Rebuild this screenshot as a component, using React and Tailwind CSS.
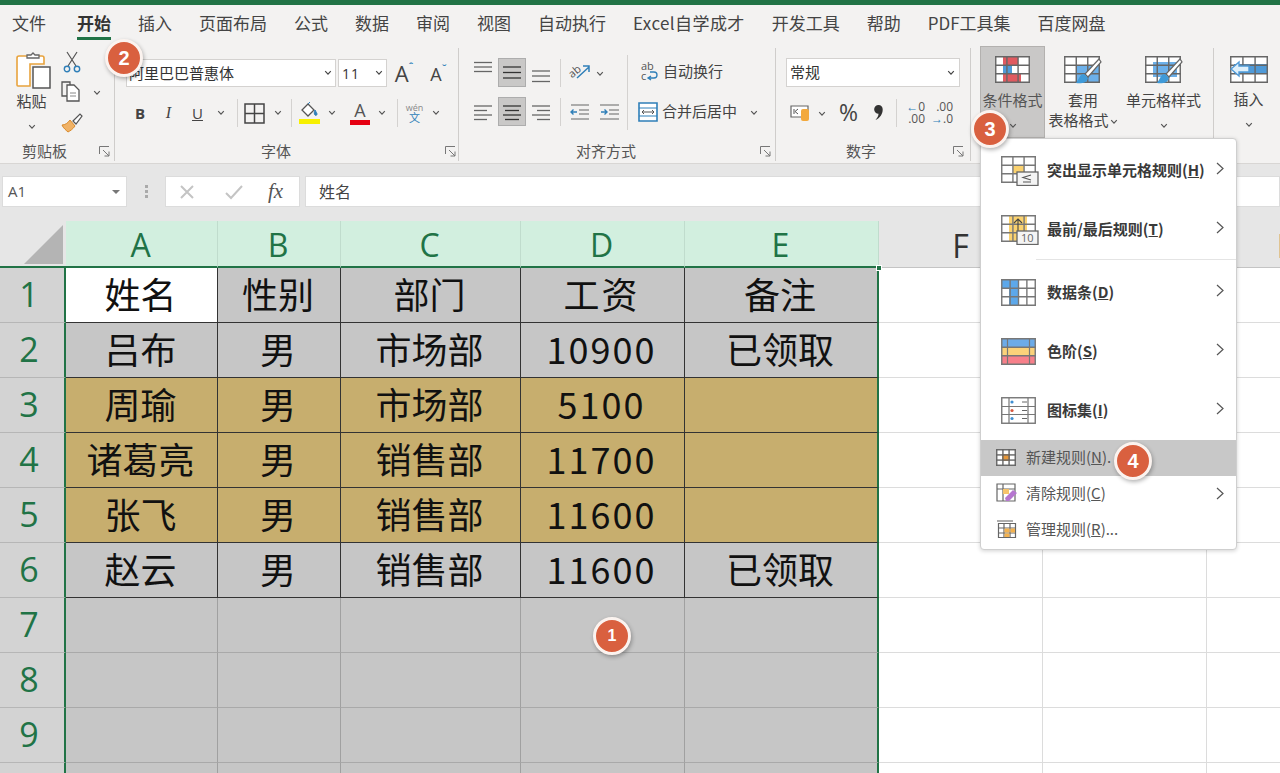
const Chev = ({ s = 8, c = '#555' }) => (
  <svg width={s} height={s * 0.7} viewBox="0 0 10 7" className="inline-block shrink-0"><path d="M1.5 1.5 5 5.2 8.5 1.5" fill="none" stroke={c} strokeWidth="1.5" /></svg>
);
const Launcher = () => (
  <svg width="11" height="11" viewBox="0 0 11 11"><path d="M.5 8V.5H10M4 4l6 6M10 5.5V10H5.5" fill="none" stroke="#777" strokeWidth="1" /></svg>
);
const Lines = ({ rows, w = 20, h = 24, active }) => (
  <svg width={w} height={h} viewBox={`0 0 ${w} ${h}`}>
    {rows.map(([x1, x2, y], i) => <path key={i} d={`M${x1} ${y}H${x2}`} stroke={active ? '#333' : '#666'} strokeWidth="1.3" />)}
  </svg>
);
const Badge = ({ n, className, small }) => (
  <div className={`absolute z-30 flex items-center justify-center rounded-full bg-[#d9603f] border-[3px] border-[#fbf3ef] text-white font-bold font-['Liberation_Sans',sans-serif] shadow-[1px_2px_4px_rgba(0,0,0,0.3)] w-[38px] h-[38px] ${small ? 'text-[16px]' : 'text-[20px]'} ${className}`}>{n}</div>
);
const GridIcon = ({ w = 36, h = 28, cols = 3, rows = 3, fills = [], children, stroke = '#666', offset = 0 }) => {
  const vs = Array.from({ length: cols + 1 }, (_, i) => 0.75 + ((w - 1.5) * i) / cols);
  const hs = Array.from({ length: rows + 1 }, (_, i) => 0.75 + ((h - 1.5) * i) / rows);
  return (
    <svg width={w + offset} height={h + offset} viewBox={`0 0 ${w + offset} ${h + offset}`} className="shrink-0">
      <rect x="0.75" y="0.75" width={w - 1.5} height={h - 1.5} fill="#fff" />
      {fills.map(([x, y, fw, fh, c], i) => <rect key={i} x={x} y={y} width={fw} height={fh} fill={c} />)}
      {vs.map((x, i) => <path key={i} d={`M${x} 0V${h}`} stroke={stroke} strokeWidth="1.4" />)}
      {hs.map((y, i) => <path key={i} d={`M0 ${y}H${w}`} stroke={stroke} strokeWidth="1.4" />)}
      {children}
    </svg>
  );
};
const Brush = ({ x = 0, y = 0 }) => (
  <g transform={`translate(${x} ${y})`}>
    <path d="M23 0 9 15l3 3L25 3z" fill="#fff" stroke="#666" strokeWidth="1.2" />
    <path d="M8 15c-4 0-5 5-8 9 5 1 11 0 12-5z" fill="#3f9ad8" />
  </g>
);
const Sep = () => <div className="w-px h-[28px] bg-[#d4d2d0] shrink-0" />;

const tabs = ['文件', '开始', '插入', '页面布局', '公式', '数据', '审阅', '视图', '自动执行', 'Excel自学成才', '开发工具', '帮助', 'PDF工具集', '百度网盘'];

function Ribbon() {
  return (
    <div className="flex h-[123px] bg-[#f3f2f1] text-[#444] text-[15px]">
      {/* clipboard */}
      <div className="w-[115px] h-[113px] mt-2 border-r border-[#cfcdcb] flex flex-col">
        <div className="flex-1 flex">
          <div className="w-[61px] flex flex-col items-center pl-[2px]">
            <svg width="36" height="38" viewBox="0 0 36 38" className="mt-[4px] ml-[4px]">
              <path d="M8 4h18a2 2 0 0 1 2 2v6H14v22H2a1 1 0 0 1-1-1V6a2 2 0 0 1 2-2z" fill="#fff" stroke="#e8a33d" strokeWidth="1.6" />
              <path d="M11 6V3h4l2-2 2 2h4v3z" fill="#fff" stroke="#666" strokeWidth="1.3" />
              <path d="M17 15h17v21H17z" fill="#fff" stroke="#555" strokeWidth="1.5" />
            </svg>
            <span className="mt-[1px] leading-[20px]">粘贴</span>
            <span className="mt-[6px] leading-none"><Chev /></span>
          </div>
          <div className="flex flex-col">
            <svg width="18" height="22" viewBox="0 0 18 22" className="mt-[3px] ml-[2px]">
              <path d="M4 1l9 14M14 1 5 15" stroke="#555" strokeWidth="1.2" />
              <circle cx="4" cy="18" r="2.7" fill="none" stroke="#2f7fb8" strokeWidth="1.4" /><circle cx="14" cy="18" r="2.7" fill="none" stroke="#2f7fb8" strokeWidth="1.4" />
            </svg>
            <div className="flex items-center mt-[7px]">
              <svg width="21" height="21" viewBox="0 0 21 21"><path d="M6 15H1V1h8l0 3" fill="none" stroke="#555" strokeWidth="1.3" /><path d="M6 4h7l5 5v11H6z" fill="#fff" stroke="#555" strokeWidth="1.3" /><path d="M9 12h6M9 15h6" stroke="#888" /></svg>
              <span className="ml-[11px]"><Chev /></span>
            </div>
            <svg width="22" height="22" viewBox="0 0 22 22" className="mt-[9px]">
              <path d="M1 13c3 0 6-2 8-5l5 6c-2 3-5 5-7 6-1-1-5-4-6-7z" fill="#f0b266" stroke="#d98a2b" />
              <path d="M12 9l7-7 2 2-6 8z" fill="#fff" stroke="#555" strokeWidth="1.2" />
            </svg>
          </div>
        </div>
        <div className="h-[22px] flex items-center pt-[2px]">
          <span className="ml-[22px] text-[#555]">剪贴板</span>
          <span className="ml-[32px]"><Launcher /></span>
        </div>
      </div>

      {/* font */}
      <div className="w-[344px] h-[113px] mt-2 border-r border-[#cfcdcb] flex flex-col">
        <div className="flex-1 pl-[11px]">
          <div className="flex items-center mt-[11px] h-[28px]">
            <div className="w-[212px] h-[28px] bg-white border border-[#d4d2d0] flex items-center justify-between pl-[2px] pr-[3px] text-[#333]">
              <span>阿里巴巴普惠体</span><Chev c="#444" />
            </div>
            <div className="ml-[2px] w-[49px] h-[28px] bg-white border border-[#d4d2d0] flex items-center justify-between px-[3px] pr-[3px] text-[14px] text-[#333]">
              <span className="font-['Open_Sans'] tracking-[1px]">11</span><Chev c="#444" />
            </div>
            <div className="w-[40px] ml-[4px] flex items-start text-[22px] leading-none font-['Open_Sans'] text-[#444]"><span className="ml-[4px]">A</span><span className="text-[10px] text-[#2f7fb8] font-bold">ˆ</span></div>
            <div className="w-[28px] flex items-start text-[18px] leading-none font-['Open_Sans'] text-[#444]"><span className="mt-[1px]">A</span><span className="text-[10px] text-[#2f7fb8] font-bold">ˇ</span></div>
          </div>
          <div className="flex items-center mt-[12px] h-[28px] text-[#444]">
            <div className="w-[28px] text-center font-bold text-[15px] font-['Open_Sans']">B</div>
            <div className="w-[29px] text-center italic text-[16px] font-['Liberation_Serif']">I</div>
            <div className="w-[29px] text-center underline text-[15px] font-['Open_Sans']">U</div>
            <div className="w-[18px] flex justify-center"><Chev /></div>
            <div className="w-[7px]" /><Sep />
            <div className="w-[6px]" />
            <svg width="21" height="21" viewBox="0 0 21 21"><path d="M1 1h19v19H1zM10.5 1v19M1 10.5h19" fill="none" stroke="#444" strokeWidth="1.5" /></svg>
            <div className="w-[26px] flex justify-center"><Chev /></div>
            <Sep />
            <div className="w-[7px]" />
            <svg width="21" height="24" viewBox="0 0 21 24"><path d="M9 3 3 9l6 6 6-6z" fill="#fff" stroke="#555" strokeWidth="1.3" /><path d="M9 3l2-2M16 9c1 2 2 3 2 4s-1 2-2 1-1-3 0-5z" stroke="#2f7fb8" fill="#2f7fb8" /><rect x="0" y="18" width="21" height="5" fill="#f7f000" /></svg>
            <div className="w-[23px] flex justify-center"><Chev /></div>
            <div className="w-[7px]" />
            <div className="w-[20px] h-[24px] flex flex-col items-center">
              <span className="text-[18px] leading-[18px] font-['Open_Sans'] text-[#555]">A</span>
              <div className="w-[20px] h-[5px] bg-[#e50012] mt-[1px]" />
            </div>
            <div className="w-[24px] flex justify-center"><Chev /></div>
            <div className="w-[3px]" /><Sep />
            <div className="w-[7px]" />
            <div className="w-[19px] flex flex-col items-center leading-none"><span className="text-[9px] text-[#888] font-['Open_Sans']">wén</span><span className="text-[11px] text-[#2f7fb8]">文</span></div>
            <div className="w-[24px] flex justify-center"><Chev /></div>
          </div>
        </div>
        <div className="h-[22px] flex items-center pt-[2px]">
          <span className="ml-[146px] text-[#555]">字体</span>
          <span className="ml-[154px]"><Launcher /></span>
        </div>
      </div>

      {/* align */}
      <div className="w-[317px] h-[113px] mt-2 border-r border-[#cfcdcb] flex flex-col">
        <div className="flex-1 flex">
          <div className="w-[169px] pl-[10px] border-r border-[#d4d2d0] h-[75px] mt-[7px]">
            <div className="flex items-center mt-[3px] h-[29px]">
              <div className="w-[28px] flex justify-center"><Lines rows={[[1, 19, 1.5], [1, 19, 6], [1, 19, 10.5]]} /></div>
              <div className="ml-[1px] w-[28px] h-[29px] bg-[#c9c8c7] border border-[#adadad] flex items-center justify-center"><Lines active rows={[[1, 19, 6], [1, 19, 11.5], [1, 19, 17]]} /></div>
              <div className="ml-[1px] w-[28px] flex justify-center"><Lines rows={[[1, 19, 10], [1, 19, 15], [1, 19, 20.5]]} /></div>
              <div className="w-[5px]" /><Sep />
              <div className="w-[7px]" />
              <svg width="23" height="20" viewBox="0 0 23 20"><text x="1" y="13" fontSize="11" fill="#555" fontFamily="Open Sans" transform="rotate(-40 6 10)">ab</text><path d="M9 15 21 4M15 3h6v6" fill="none" stroke="#2f7fb8" strokeWidth="1.5" /></svg>
              <span className="ml-[5px]"><Chev /></span>
            </div>
            <div className="flex items-center mt-[10px] h-[29px]">
              <div className="w-[28px] flex justify-center"><Lines rows={[[1, 19, 6], [1, 14, 10.5], [1, 19, 15], [1, 14, 19.5]]} /></div>
              <div className="ml-[1px] w-[28px] h-[29px] bg-[#c9c8c7] border border-[#adadad] flex items-center justify-center"><Lines active rows={[[1, 19, 6], [3, 17, 10.5], [1, 19, 15], [3, 17, 19.5]]} /></div>
              <div className="ml-[1px] w-[28px] flex justify-center"><Lines rows={[[1, 19, 6], [6, 19, 10.5], [1, 19, 15], [6, 19, 19.5]]} /></div>
              <div className="w-[5px]" /><Sep />
              <div className="w-[9px]" />
              <svg width="20" height="16" viewBox="0 0 20 16"><path d="M1 1h18M9 6h10M9 10h10M1 15h18" stroke="#666" strokeWidth="1.2" /><path d="M7 8H1M3.5 5.5 1 8l2.5 2.5" fill="none" stroke="#2f7fb8" strokeWidth="1.4" /></svg>
              <div className="w-[10px]" />
              <svg width="19" height="16" viewBox="0 0 19 16"><path d="M0 1h19M9 6h10M9 10h10M0 15h19" stroke="#666" strokeWidth="1.2" /><path d="M1 8h6M4.5 5.5 7 8l-2.5 2.5" fill="none" stroke="#2f7fb8" strokeWidth="1.4" /></svg>
            </div>
          </div>
          <div className="flex-1 pl-[10px] mt-[7px]">
            <div className="flex items-center mt-[3px] h-[29px] pl-[3px] -translate-y-[1px]">
              <svg width="18" height="22" viewBox="0 0 18 22"><text x="0" y="9" fontSize="11" fill="#555" fontFamily="Open Sans">ab</text><text x="0" y="19" fontSize="11" fill="#555" fontFamily="Open Sans">c</text><path d="M8 17h5a3 3 0 0 0 0-6H9M10 15l-3 2 3 2" fill="none" stroke="#2f7fb8" strokeWidth="1.3" /></svg>
              <span className="ml-[4px] text-[#444]">自动换行</span>
            </div>
            <div className="flex items-center mt-[10px] h-[29px]">
              <svg width="20" height="20" viewBox="0 0 20 20"><path d="M1 1h18v18H1z" fill="#fff" stroke="#2f7fb8" strokeWidth="1.6" /><path d="M1 6h18M1 14h18" stroke="#2f7fb8" /><path d="M4 10h12M6 8l-2 2 2 2M14 8l2 2-2 2" fill="none" stroke="#555" /></svg>
              <span className="ml-[4px] text-[#444]">合并后居中</span>
              <span className="ml-[13px]"><Chev /></span>
            </div>
          </div>
        </div>
        <div className="h-[22px] flex items-center pt-[2px]">
          <span className="ml-[117px] text-[#555]">对齐方式</span>
          <span className="ml-[124px]"><Launcher /></span>
        </div>
      </div>

      {/* number */}
      <div className="w-[195px] h-[113px] mt-2 border-r border-[#cfcdcb] flex flex-col">
        <div className="flex-1 pl-[10px]">
          <div className="mt-[10px] w-[174px] h-[29px] bg-white border border-[#d4d2d0] flex items-center justify-between pl-[3px] pr-[4px] text-[#333]">
            <span>常规</span><Chev c="#444" />
          </div>
          <div className="flex items-center mt-[11px] h-[29px] pl-[4px]">
            <svg width="21" height="20" viewBox="0 0 21 20"><path d="M1 3h17v11H1z" fill="#fff" stroke="#666" strokeWidth="1.2" /><path d="M4 6v5M8 6l-3 2.5L8 11" stroke="#555" fill="none" /><rect x="11" y="6" width="8" height="12" rx="2" fill="#f3a93c" /></svg>
            <span className="ml-[7px]"><Chev /></span>
            <span className="ml-[13px] text-[23px] leading-none font-['Open_Sans'] text-[#444]">%</span>
            <svg width="11" height="17" viewBox="0 0 11 17" className="ml-[15px]"><path d="M5.5 1a4.2 4.2 0 0 1 4.2 4.4C9.7 10 7 14 2.5 16 4.5 13.5 5.5 11.5 5.5 9.7A4.3 4.3 0 0 1 5.5 1z" fill="#333" /></svg>
            <div className="w-[12px]" /><Sep />
            <div className="w-[7px]" />
            <div className="w-[21px] h-[24px] flex flex-col text-[12px] leading-[12px] font-['Open_Sans'] text-[#555] items-end">
              <span className="flex items-center"><span className="text-[#2f7fb8] text-[12px] leading-none font-bold">←</span>0</span><span>.00</span>
            </div>
            <div className="w-[7px]" />
            <div className="w-[21px] h-[24px] flex flex-col text-[12px] leading-[12px] font-['Open_Sans'] text-[#555] items-end">
              <span>.00</span><span className="flex items-center"><span className="text-[#2f7fb8] text-[12px] leading-none font-bold">→</span>.0</span>
            </div>
          </div>
        </div>
        <div className="h-[22px] flex items-center pt-[2px]">
          <span className="ml-[70px] text-[#555]">数字</span>
          <span className="ml-[77px]"><Launcher /></span>
        </div>
      </div>

      {/* styles */}
      <div className="w-[243px] h-[113px] mt-2 border-r border-[#cfcdcb] flex pl-[9px]">
        <div className="w-[65px] h-[92px] -mt-[2px] bg-[#c9c8c7] border border-[#b3b1af] flex flex-col items-center text-[#555]">
          <div className="mt-[9px]">
            <GridIcon w={35} h={27} fills={[[8, 1, 15, 8, '#e05a60'], [8, 9, 9, 9, '#4f9ad8'], [8, 18, 18, 8, '#e05a60']]} />
          </div>
          <span className="mt-[7px] leading-[20px] whitespace-nowrap">条件格式</span>
          <span className="mt-[6px] leading-none"><Chev /></span>
        </div>
        <div className="w-[76px] -mt-[2px] flex flex-col items-center">
          <div className="mt-[10px]">
            <GridIcon w={36} h={27} offset={2} fills={[[12, 9, 24, 17, '#6cb0ea']]}><Brush x={12} y={3} /></GridIcon>
          </div>
          <span className="mt-[5px] leading-[20px]">套用</span>
          <span className="leading-[19px] whitespace-nowrap">表格格式<span className="ml-[1px]"><Chev /></span></span>
        </div>
        <div className="w-[85px] -mt-[2px] flex flex-col items-center">
          <div className="mt-[10px]">
            <GridIcon w={36} h={27} offset={2} fills={[[8, 6, 24, 15, '#6cb0ea']]}><Brush x={12} y={3} /></GridIcon>
          </div>
          <span className="mt-[5px] leading-[20px] whitespace-nowrap">单元格样式</span>
          <span className="mt-[6px] leading-none"><Chev /></span>
        </div>
      </div>

      {/* cells */}
      <div className="flex-1 flex flex-col items-center pl-[3px] mt-[6px]">
        <div className="mt-[10px]">
          <GridIcon w={38} h={27} fills={[[4, 8, 34, 10, '#4f9ad8']]}>
            <path d="M1 13l8-7v4h10v6H9v4z" fill="#dff0fb" stroke="#4f9ad8" strokeWidth="1.4" />
          </GridIcon>
        </div>
        <span className="mt-[6px] leading-[20px]">插入</span>
        <span className="mt-[6px] leading-none"><Chev /></span>
      </div>
    </div>
  );
}

function FormulaBar() {
  return (
    <div className="h-[58px] bg-[#e6e6e6] border-t border-[#d8d6d4] flex pt-[12px] text-[#555]">
      <div className="ml-[2px] w-[125px] h-[31px] bg-white border border-[#dcdcdc] flex items-center justify-between pl-[5px] pr-[6px] text-[15px] font-['Open_Sans']">
        <span>A1</span><span className="w-0 h-0 border-x-[4px] border-x-transparent border-t-[4px] border-t-[#777]" />
      </div>
      <div className="w-[38px] h-[31px] flex flex-col items-center justify-center gap-[2px]">
        <span className="w-[3px] h-[3px] bg-[#aaa]" /><span className="w-[3px] h-[3px] bg-[#aaa]" /><span className="w-[3px] h-[3px] bg-[#aaa]" />
      </div>
      <div className="w-[135px] h-[31px] bg-white border border-[#dcdcdc] flex items-center">
        <svg width="16" height="16" viewBox="0 0 16 16" className="ml-[13px]"><path d="M2 2l12 12M14 2 2 14" stroke="#c4c4c4" strokeWidth="2" /></svg>
        <svg width="20" height="16" viewBox="0 0 20 16" className="ml-[29px]"><path d="M2 9l5 5L18 2" fill="none" stroke="#c4c4c4" strokeWidth="2" /></svg>
        <span className="ml-[24px] italic text-[21px] leading-none font-['Liberation_Serif'] text-[#555]">fx</span>
      </div>
      <div className="ml-[5px] flex-1 h-[31px] bg-white border border-[#dcdcdc] flex items-center pl-[13px] pb-[2px] text-[16px] text-[#444]">姓名</div>
    </div>
  );
}

const data = [
  ['姓名', '性别', '部门', '工资', '备注'],
  ['吕布', '男', '市场部', '10900', '已领取'],
  ['周瑜', '男', '市场部', '5100', ''],
  ['诸葛亮', '男', '销售部', '11700', ''],
  ['张飞', '男', '销售部', '11600', ''],
  ['赵云', '男', '销售部', '11600', '已领取'],
  ['', '', '', '', ''],
  ['', '', '', '', ''],
  ['', '', '', '', ''],
  ['', '', '', '', ''],
];

function Sheet() {
  return (
    <div className="grid grid-cols-[66px_152px_123px_180px_164px_194px_164px_164px_164px] grid-rows-[47px_repeat(10,55px)] font-['Noto_Sans_CJK_SC',sans-serif]">
      <div className="bg-[#e6e6e6] border-b-2 border-[#217346] flex items-end justify-end pr-[3px] pb-[2px]">
        <div className="w-0 h-0 border-l-[39px] border-l-transparent border-b-[39px] border-b-[#b4b4b4]" />
      </div>
      {['A', 'B', 'C', 'D', 'E'].map((c) => (
        <div key={c} className="bg-[#d2efdf] border-r border-[#c0dccd] border-b-2 border-b-[#217346] text-[#217346] text-[32px] font-['Open_Sans'] flex items-center justify-center leading-none pt-[3px] pr-[2px]">{c}</div>
      ))}
      {['F', 'G', 'H'].map((c) => (
        <div key={c} className="bg-[#e6e6e6] border-r border-[#c9c9c9] border-b border-b-[#c4c4c4] text-[#333] text-[32px] font-['Open_Sans'] flex items-center justify-center leading-none pt-[3px]">{c}</div>
      ))}
      {data.map((row, r) => {
        const tan = r >= 2 && r <= 4;
        const strong = r <= 5;
        return [
          <div key={`h${r}`} className="bg-[#d3d3d3] border-b border-[#b6b6b6] border-r-2 border-r-[#217346] text-[#217346] text-[34px] font-['Open_Sans'] flex items-center justify-center pr-[6px] pb-[2px] leading-none">{r + 1}</div>,
          ...row.map((v, c) => {
            const white = r === 0 && c === 0;
            return (
              <div key={`${r}-${c}`} className={`flex items-center justify-center pb-[5px] pr-[2px] text-[36px] text-[#111] leading-none whitespace-nowrap ${white ? 'bg-white' : tan ? 'bg-[#c7ae6e]' : 'bg-[#c6c6c6]'} ${strong ? 'border-b border-b-[#333]' : 'border-b border-b-[#a9a9a9]'} ${c === 4 ? 'border-r-2 border-r-[#217346]' : strong ? 'border-r border-r-[#333]' : 'border-r border-r-[#a0a0a0]'} ${c === 3 ? 'tracking-[2px]' : ''}`}>{v}</div>
            );
          }),
          <div key={`f${r}`} className="bg-white border-b border-r border-[#dcdcdc]" />,
          <div key={`g${r}`} className="bg-white border-b border-r border-[#dcdcdc]" />,
          <div key={`i${r}`} className="bg-white border-b border-[#dcdcdc]" />,
        ];
      })}
    </div>
  );
}

const Arrow = () => <svg width="9" height="13" viewBox="0 0 9 13"><path d="M1 1l6 5.5L1 12" fill="none" stroke="#555" strokeWidth="1.2" /></svg>;
const MenuRow = ({ icon, label, letter }) => (
  <div className="h-[59px] flex items-center pl-[20px]">
    <span className="w-[46px] flex items-center">{icon}</span>
    <span className="text-[15px] font-semibold text-[#3a3a3a] whitespace-nowrap">{label}(<span className="underline">{letter}</span>)</span>
    <span className="ml-auto mr-[11px] -mt-[4px]"><Arrow /></span>
  </div>
);
const SmallRow = ({ icon, label, letter, tail = '', arrow, active }) => (
  <div className={`h-[36px] flex items-center pl-[15px] pb-[2px] ${active ? 'bg-[#c8c8c8]' : ''}`}>
    <span className="w-[30px] flex items-center">{icon}</span>
    <span className="text-[15px] text-[#555] whitespace-nowrap">{label}(<span className="underline">{letter}</span>){tail}</span>
    {arrow && <span className="ml-auto mr-[11px]"><Arrow /></span>}
  </div>
);

function Menu() {
  return (
    <div className="absolute z-20 left-[980px] top-[138px] w-[257px] h-[412px] bg-white rounded-[4px] border border-[#cfcfcf] shadow-[0_1px_4px_rgba(0,0,0,0.18)] pt-[2px] font-['Noto_Sans_CJK_SC',sans-serif]">
      <MenuRow label="突出显示单元格规则" letter="H" icon={
        <GridIcon w={35} h={27} offset={3} fills={[[12, 9, 11, 9, '#fbd26f']]} stroke="#777">
          <rect x="16" y="16" width="21" height="13.5" fill="#f4f4f4" stroke="#666" strokeWidth="1.3" />
          <path d="M30 19l-8 2.5 8 2.5M22 26h8" fill="none" stroke="#555" strokeWidth="1.1" />
        </GridIcon>} />
      <MenuRow label="最前/最后规则" letter="T" icon={
        <GridIcon w={35} h={27} offset={3} fills={[[8, 1, 18, 25, '#fbd26f']]} stroke="#777">
          <path d="M17 16V4M13 8l4-4 4 4" fill="none" stroke="#444" strokeWidth="1.1" />
          <rect x="16" y="16" width="21" height="13.5" fill="#f4f4f4" stroke="#666" strokeWidth="1.3" />
          <text x="20" y="27" fontSize="11" fill="#666" fontFamily="Open Sans">10</text>
        </GridIcon>} />
      <div className="h-px bg-[#e4e4e4] ml-[55px] mb-[3px]" />
      <MenuRow label="数据条" letter="D" icon={
        <GridIcon w={35} h={27} cols={4} fills={[[1, 1, 17, 9, '#5da8ea'], [8, 10, 9, 16, '#5da8ea']]} stroke="#777" />} />
      <MenuRow label="色阶" letter="S" icon={
        <GridIcon w={35} h={27} rows={3} cols={1} fills={[[1, 1, 33, 8.5, '#6cabe8'], [1, 9.5, 33, 8, '#fbd27a'], [1, 17.5, 33, 9, '#f7808a']]} stroke="#777">
          <path d="M6.5 0V27M28.5 0V27" stroke="#777" strokeWidth="1.2" />
        </GridIcon>} />
      <MenuRow label="图标集" letter="I" icon={
        <svg width="35" height="27" viewBox="0 0 35 27" className="shrink-0">
          <rect x=".75" y=".75" width="33.5" height="25.5" fill="#fff" stroke="#777" strokeWidth="1.4" />
          <path d="M8 1v25M27 1v25M1 9.5h33M1 17.5h33" stroke="#777" strokeWidth="1.2" />
          <circle cx="11" cy="5" r="1.6" fill="#3f8fd2" /><circle cx="11" cy="13.5" r="1.6" fill="#d8593f" /><circle cx="11" cy="21.5" r="1.6" fill="#3f8fd2" />
          <path d="M21 5h5M21 13.5h5M21 21.5h5" stroke="#666" />
        </svg>} />
      <SmallRow active label="新建规则" letter="N" tail="." icon={
        <GridIcon w={20} h={17} cols={3} rows={3} fills={[[6, 5, 8, 7, '#e8983a']]} stroke="#666" />} />
      <SmallRow arrow label="清除规则" letter="C" icon={
        <svg width="22" height="20" viewBox="0 0 22 20" className="shrink-0">
          <path d="M1 1h18v17H1zM1 6h18M7 1v17" fill="none" stroke="#666" strokeWidth="1.2" />
          <rect x="7" y="6" width="6" height="5" fill="#f6c36c" />
          <path d="M9 15l8-8 4 3-8 8H10z" fill="#b576cf" />
        </svg>} />
      <SmallRow label="管理规则" letter="R" tail="..." icon={
        <svg width="21" height="19" viewBox="0 0 21 19" className="shrink-0">
          <path d="M1 1h16" stroke="#777" strokeWidth="1.2" />
          <path d="M2.5 3.5h17v14h-17zM2.5 8h17M2.5 13h17M8 3.5v14M14 3.5v14" fill="#fff" stroke="#666" strokeWidth="1.2" />
          <rect x="8.5" y="8.5" width="5" height="4" fill="#f3b24f" /><rect x="14.5" y="8.5" width="4.5" height="4" fill="#f3b24f" /><rect x="8.5" y="13.5" width="5" height="3.5" fill="#f3b24f" />
        </svg>} />
    </div>
  );
}

export default function App() {
  return (
    <div className="relative w-[1280px] h-[773px] overflow-hidden bg-white font-['Noto_Sans_CJK_SC',sans-serif]">
      <div className="h-[5px] bg-[#217346]" />
      <div className="h-[35px] bg-[#f3f2f1] flex items-start pl-[12px] gap-[27px] text-[#444] text-[17px] whitespace-nowrap">
        {tabs.map((t) => (
          <div key={t} className={`h-[35px] pt-[6px] leading-[24px] ${t === '开始' ? 'font-bold border-b-[3px] border-[#217346] text-[#333]' : ''} ${t === '文件' ? 'mr-[4px]' : ''} ${t === 'Excel自学成才' ? 'tracking-[0.4px]' : ''}`}>{t}</div>
        ))}
      </div>
      <Ribbon />
      <FormulaBar />
      <Sheet />
      <Menu />
      <div className="absolute z-10 left-[876px] top-[265px] w-[6px] h-[6px] bg-[#217346] border border-white" />
      <Badge n="1" small className="left-[593px] top-[617px]" />
      <Badge n="2" className="left-[105px] top-[39px]" />
      <Badge n="3" className="left-[971px] top-[110px]" />
      <Badge n="4" className="left-[1114px] top-[442px]" />
    </div>
  );
}
